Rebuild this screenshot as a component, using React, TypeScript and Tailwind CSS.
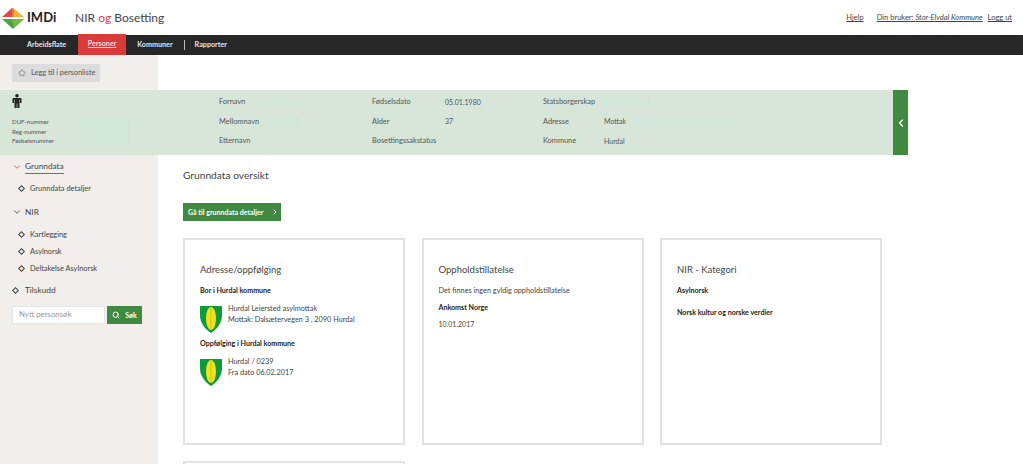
import { ChevronDown, ChevronLeft, ChevronRight, Search, Star } from 'lucide-react'

const Shield = () => (
	<svg width="22" height="27" viewBox="0 0 22 27" className="shrink-0">
		<path d="M0 0H22V9C22 17 17 23 11 27C5 23 0 17 0 9Z" fill="#0f9a3c" />
		<ellipse cx="11" cy="12.5" rx="5" ry="11.500" fill="#f2e21c" />
		<path d="M11 2V24" stroke="#c9c22a" strokeWidth="1" />
	</svg>
)

const Logo = () => (
	<svg width="24" height="24" viewBox="0 0 24 24" className="shrink-0">
		<path d="M1 11L11 2V11Z" fill="#e2463c" />
		<path d="M11 2L13 2.500V11H11Z" fill="#ef7a45" />
		<path d="M13 2.500L23 11H13Z" fill="#f3b13d" />
		<path d="M1 13H23L12 23Z" fill="#4ba446" />
		<path d="M11 13H23L13 22Z" fill="#7cb83f" />
	</svg>
)

const Diamond = () => (
	<span className="inline-block w-[5px] h-[5px] rotate-45 border border-[#444] shrink-0" />
)

const SubItem = ({ label }: { label: string }) => (
	<div className="flex items-center gap-[6px] pl-[19px] h-[17px] text-[7.400px] text-[#444]">
		<Diamond />
		<span>{label}</span>
	</div>
)

const BandRow = ({ label, value, labelWidth, patch }: { label: string; value?: string; labelWidth?: string; patch?: string }) => (
	<div className="h-[19.500px] flex items-center whitespace-nowrap">
		<span className={labelWidth}>{label}</span>
		{value && <span className="text-[7px]">{value}</span>}
		{patch && <span className={`h-[10px] bg-[#d2e6da] ${patch}`} />}
	</div>
)

const Card = ({ title, children }: { title: string; children: React.ReactNode }) => (
	<div className="w-[222px] h-[207px] border-2 border-[#e3e3e3] px-[15px] pt-[22px] shrink-0">
		<h3 className="text-[9.500px] leading-[16px] text-[#444] mb-[8px]">{title}</h3>
		{children}
	</div>
)

const App = () => {
	return (
		<div className="w-[1023px] h-[464px] overflow-hidden bg-white text-[#444] font-['Lato',sans-serif]">
			<header className="h-[35px] flex items-center">
				<div className="flex items-center w-[75px] pl-[1px] gap-[2px]">
					<Logo />
					<span className="text-[13px] font-bold text-[#222]">IMDi</span>
				</div>
				<div className="text-[12px] text-[#444]">
					NIR <span className="text-[#d9443f]">og</span> Bosetting
				</div>
				<div className="ml-auto flex text-[7.500px] underline pr-[11px] text-[#444]">
					<span>Hjelp</span>
					<span className="ml-[13px]">Din bruker: <em>Stor-Elvdal Kommune</em></span>
					<span className="ml-[5px]">Logg ut</span>
				</div>
			</header>

			<nav className="h-[20px] bg-[#272727] flex items-center pl-[27px] text-[7.200px] font-bold text-[#e6e6e6]">
				<span>Arbeidsflate</span>
				<span className="ml-[12px] bg-[#d93a3a] h-[21px] -mt-[1px] w-[48px] flex items-center justify-center underline text-[#f3dede]">Personer</span>
				<span className="ml-[11px]">Kommuner</span>
				<span className="ml-[11px] w-px h-[10px] bg-[#bbb]" />
				<span className="ml-[10px]">Rapporter</span>
			</nav>

			<div className="w-[158px] h-[35px] bg-[#f1eeeb] pl-[12px] pt-[9px]">
				<button className="w-[88px] h-[18px] bg-[#dcdcdc] flex items-center pl-[6px] gap-[5px] text-[7.400px] text-[#555] whitespace-nowrap">
					<Star size={8} strokeWidth={1.5} className="shrink-0" />
					Legg til i personliste
				</button>
			</div>

			<section className="w-[908px] h-[65px] bg-[#d7e6d8] flex text-[7.400px] text-[#555]">
				<div className="w-[219px] pl-[12px] pt-[4px]">
					<svg width="10" height="14" viewBox="0 0 10 14" fill="#222">
						<circle cx="5" cy="1.800" r="1.800" />
						<path d="M1.500 4H8.500C9.200 4 9.500 4.500 9.500 5V9H8V5.500H7.500V14H5.300V9.500H4.700V14H2.500V5.500H2V9H0.500V5C0.500 4.500 0.800 4 1.500 4Z" />
					</svg>
					<div className="mt-[9px] flex">
						<div className="text-[6.100px] leading-[9.500px] w-[68px]">
							<div>DUF-nummer</div>
							<div>Reg-nummer</div>
							<div>Fødselsnummer</div>
						</div>
						<div className="w-[50px] h-[28px] bg-[#d2e6da]" />
					</div>
				</div>
				<div className="w-[153px] pt-[2px]">
					<BandRow label="Fornavn" patch="ml-[20px] w-[30px]" />
					<BandRow label="Mellomnavn" patch="ml-[11px] w-[30px]" />
					<BandRow label="Etternavn" />
				</div>
				<div className="w-[171px] pt-[2px]">
					<BandRow label="Fødselsdato" value="05.01.1980" labelWidth="w-[73px]" />
					<BandRow label="Alder" value="37" labelWidth="w-[73px]" />
					<BandRow label="Bosettingssakstatus" />
				</div>
				<div className="flex-1 pt-[2px]">
					<BandRow label="Statsborgerskap" patch="ml-[5px] w-[50px]" />
					<BandRow label="Adresse" value="Mottak" labelWidth="w-[61px]" patch="ml-[7px] w-[100px]" />
					<BandRow label="Kommune" value="Hurdal" labelWidth="w-[61px]" />
				</div>
				<div className="w-[15px] bg-[#3f8a40] flex items-center justify-center text-white">
					<ChevronLeft size={12} strokeWidth={2.500} />
				</div>
			</section>

			<div className="flex">
				<aside className="w-[158px] h-[309px] bg-[#f1eeeb] shrink-0 pt-[5px] text-[#444]">
					<div className="flex items-center h-[14px] pl-[12px] text-[8.300px]">
						<ChevronDown size={10} className="text-[#d9443f] mr-[3px]" />
						<span className="border-b border-[#d9443f] leading-[13px] h-[14px]">Grunndata</span>
					</div>
					<div className="mt-[6px]"><SubItem label="Grunndata detaljer" /></div>
					<div className="flex items-center h-[14px] pl-[12px] text-[8.300px] mt-[8px]">
						<ChevronDown size={10} className="mr-[3px]" />
						<span>NIR</span>
					</div>
					<div className="mt-[7px]">
						<SubItem label="Kartlegging" />
						<SubItem label="Asylnorsk" />
						<SubItem label="Deltakelse Asylnorsk" />
					</div>
					<div className="flex items-center gap-[7px] h-[14px] pl-[13px] text-[8.300px] mt-[6px]">
						<Diamond />
						<span>Tilskudd</span>
					</div>
					<div className="flex ml-[12px] mt-[9px] h-[18px] gap-[2px]">
						<div className="w-[93px] bg-white border border-[#e6e6e6] pl-[6px] flex items-center text-[7.800px] text-[#999]">Nytt personsøk</div>
						<button className="w-[35px] bg-[#3f8a40] text-white text-[7px] font-bold flex items-center justify-center gap-[5px]">
							<Search size={8} strokeWidth={3} />
							Søk
						</button>
					</div>
				</aside>

				<main className="pl-[25px] pt-[12px] flex-1">
					<h2 className="text-[10.200px] leading-[16px] text-[#444]">Grunndata oversikt</h2>
					<button className="mt-[20px] h-[18px] w-[98px] bg-[#3f8a40] text-white text-[7px] font-bold flex items-center pl-[5px] whitespace-nowrap">
						Gå til grunndata detaljer
						<ChevronRight size={8} strokeWidth={3} className="ml-[8px]" />
					</button>
					<div className="flex gap-[16.500px] mt-[17px]">
						<Card title="Adresse/oppfølging">
							<p className="text-[7.100px] font-bold text-[#222] mb-[9.500px]">Bor i Hurdal kommune</p>
							<div className="flex gap-[6px] text-[7.300px] leading-[11px]">
								<Shield />
								<div className="-mt-[3px]">
									<div>Hurdal Leiersted asylmottak</div>
									<div>Mottak: Dalsætervegen 3 , 2090 Hurdal</div>
								</div>
							</div>
							<p className="text-[7.100px] font-bold text-[#222] mt-[6px] mb-[9.500px]">Oppfølging i Hurdal kommune</p>
							<div className="flex gap-[6px] text-[7.300px] leading-[11px]">
								<Shield />
								<div className="-mt-[3px]">
									<div>Hurdal / 0239</div>
									<div>Fra dato 06.02.2017</div>
								</div>
							</div>
						</Card>
						<Card title="Oppholdstillatelse">
							<p className="text-[7.300px] text-[#444]">Det finnes ingen gyldig oppholdstillatelse</p>
							<p className="text-[7.100px] font-bold text-[#222] mt-[6px]">Ankomst Norge</p>
							<p className="text-[7px] mt-[5px]">10.01.2017</p>
						</Card>
						<Card title="NIR - Kategori">
							<p className="text-[7.100px] font-bold text-[#222]">Asylnorsk</p>
							<p className="text-[7.100px] font-bold text-[#222] mt-[11px]">Norsk kultur og norske verdier</p>
						</Card>
					</div>
					<div className="w-[222px] h-[20px] border-2 border-[#e3e3e3] mt-[16px]" />
				</main>
			</div>
		</div>
	)
}

export default App
